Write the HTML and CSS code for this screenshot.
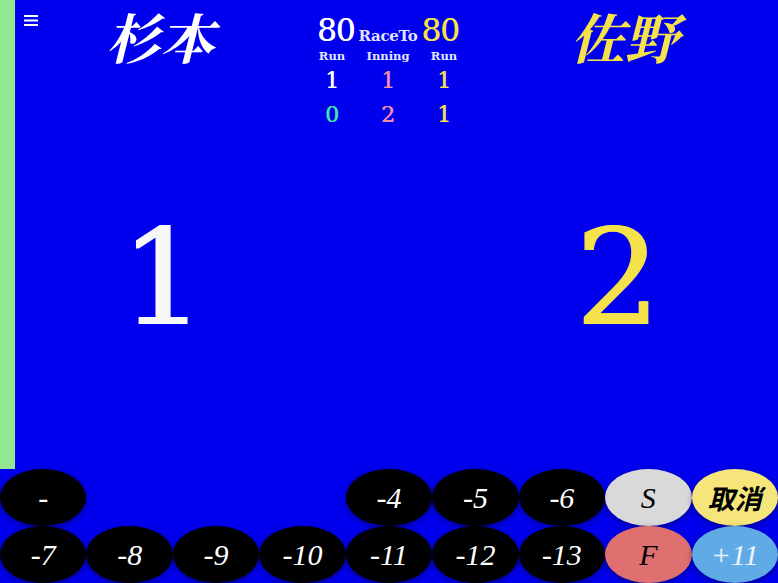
FILE: index.html
```html
<!DOCTYPE html>
<html lang="ja">
<head>
<meta charset="utf-8">
<link rel="stylesheet" href="styles.css">
</head>
<body>
<div class="top">
  <div class="side"></div>
  <div class="main">
    <div class="menu"><svg width="14" height="11" viewBox="0 0 14 11"><rect x="0" y="0" width="14" height="2" fill="#fff"/><rect x="0" y="4.5" width="14" height="2" fill="#fff"/><rect x="0" y="9" width="14" height="2" fill="#fff"/></svg></div>
    <div class="head">
      <div class="name p1">杉本</div>
      <div class="board">
        <div class="race"><span class="big80 w">80</span><span class="raceto">RaceTo</span><span class="big80 y">80</span></div>
        <div class="labels"><span>Run</span><span>Inning</span><span>Run</span></div>
        <div class="stats first"><span class="w">1</span><span class="pk">1</span><span class="y">1</span></div>
        <div class="stats"><span class="gr">0</span><span class="pk">2</span><span class="y">1</span></div>
      </div>
      <div class="name p2">佐野</div>
    </div>
    <div class="scores">
      <div class="score w">1</div>
      <div class="score y">2</div>
    </div>
  </div>
</div>
<div class="pad">
  <div class="btn">-</div>
  <div class="gap"></div>
  <div class="gap"></div>
  <div class="gap"></div>
  <div class="btn">-4</div>
  <div class="btn">-5</div>
  <div class="btn">-6</div>
  <div class="btn s">S</div>
  <div class="btn c">取消</div>
  <div class="btn">-7</div>
  <div class="btn">-8</div>
  <div class="btn">-9</div>
  <div class="btn">-10</div>
  <div class="btn">-11</div>
  <div class="btn">-12</div>
  <div class="btn">-13</div>
  <div class="btn f">F</div>
  <div class="btn p">+11</div>
</div>
</body>
</html>
```
FILE: styles.css
```css
html, body {
  margin: 0;
  padding: 0;
}
body {
  width: 778px;
  height: 583px;
  overflow: hidden;
  background: #0000ee;
  font-family: "DejaVu Serif", "Noto Serif CJK JP", "Noto Sans CJK JP", serif;
  color: #fff;
}
.top {
  display: flex;
  height: 469px;
}
.side {
  width: 15px;
  background: #93e793;
}
.main {
  flex: 1;
  position: relative;
}
.menu {
  position: absolute;
  left: 9px;
  top: 15px;
  line-height: 0;
}
.head {
  display: grid;
  grid-template-columns: 290px 166px 1fr;
}
.name {
  text-align: center;
  font-size: 54px;
  font-weight: bold;
  font-style: italic;
  line-height: 1;
  padding-top: 13px;
}
.p2 { color: #f5e24a; }
.board {
  display: flex;
  flex-direction: column;
  align-items: center;
}
.race {
  display: flex;
  align-items: baseline;
  gap: 4px;
  margin-top: 17px;
  line-height: 26px;
}
.big80 { font-size: 31px; letter-spacing: -1px; text-shadow: 0.4px 0 0 currentColor; }
.raceto { font-size: 15px; font-weight: bold; color: #e0e4ff; letter-spacing: -0.3px; }
.labels, .stats {
  display: grid;
  grid-template-columns: 56px 56px 56px;
  text-align: center;
}
.labels {
  font-size: 11.5px;
  font-weight: bold;
  color: #e0e4ff;
  line-height: 14px;
}
.stats {
  font-size: 22px;
  line-height: 34px;
  text-shadow: 0.4px 0 0 currentColor;
}
.stats.first { margin-top: 1px; }
.w { color: #fff; }
.y { color: #f5e24a; }
.pk { color: #ec8ea8; }
.gr { color: #3ee6a6; }
.scores {
  display: grid;
  grid-template-columns: 294px 147px 1fr;
  margin-top: 80px;
}
.score {
  text-align: center;
  font-size: 133px;
  line-height: 1;
  text-shadow: 2px 0 0 currentColor;
}
.score.w { color: #f7f7f7; }
.score.y { grid-column: 3; }
.pad {
  display: grid;
  grid-template-columns: repeat(9, 1fr);
  grid-template-rows: 57px 57px;
}
.btn {
  background: #000;
  border-radius: 50%;
  display: flex;
  align-items: center;
  justify-content: center;
  font-family: "Liberation Serif", serif;
  font-style: italic;
  font-size: 30px;
  color: #fff;
  box-shadow: 0 2px 6px rgba(0,0,0,0.4);
}
.btn.s { background: #d9d9d9; color: #000; }
.btn.c { background: #f5e57a; color: #000; font-weight: bold; font-size: 27px; font-family: "Noto Sans CJK JP", sans-serif; }
.btn.f { background: #e07070; color: #000; }
.btn.p { background: #60aae6; color: #eef4ff; }
```
